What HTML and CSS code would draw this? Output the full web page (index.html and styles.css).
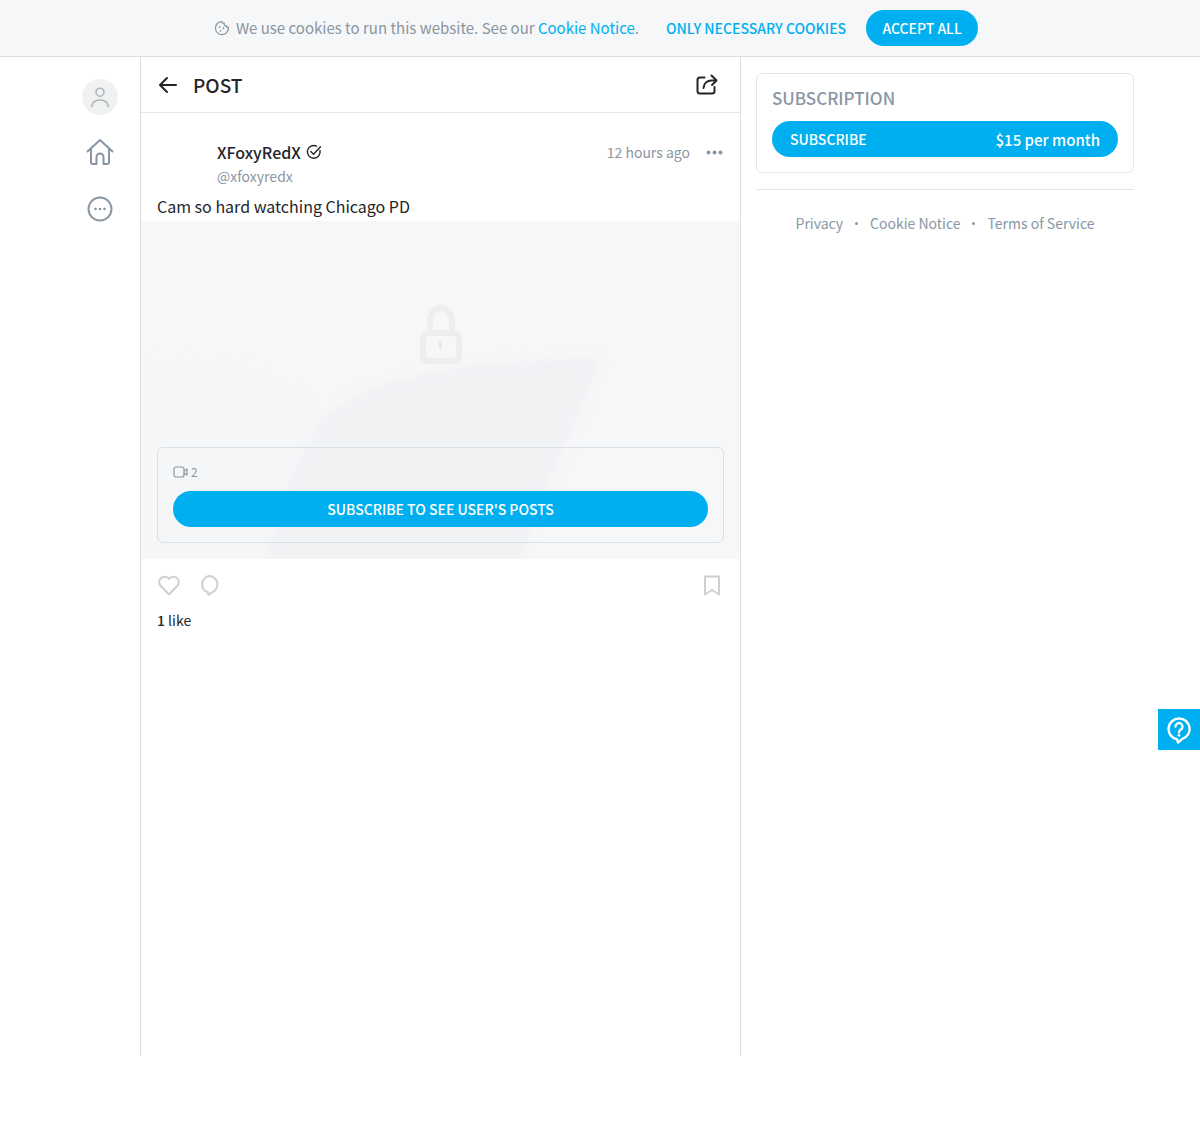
FILE: index.html
```html
<!DOCTYPE html>
<html lang="en">
<head>
  <meta charset="UTF-8">
  <meta name="viewport" content="width=device-width, initial-scale=1.0">
  <title>Post</title>
  <link rel="stylesheet" href="styles.css">
</head>
<body>
  <div class="cookie-bar">
    <svg class="cookie-icon" width="16" height="16" viewBox="0 0 16 16" fill="none" stroke="#8a96a3" stroke-width="1.3">
      <path d="M8 1.6a1.8 1.8 0 0 0 2.2 1.9 2 2 0 0 0 2.2 2.4 1.8 1.8 0 0 0 2 1.6A6.5 6.5 0 1 1 8 1.6z"/>
      <circle cx="5.6" cy="7" r=".9" fill="#8a96a3" stroke="none"/>
      <circle cx="9.4" cy="8.2" r=".9" fill="#8a96a3" stroke="none"/>
      <circle cx="6.6" cy="10.8" r=".9" fill="#8a96a3" stroke="none"/>
    </svg>
    <span class="cookie-text">We use cookies to run this website. See our <a href="#">Cookie Notice</a>.</span>
    <a class="cookie-necessary" href="#">ONLY NECESSARY COOKIES</a>
    <button class="pill cookie-accept">ACCEPT ALL</button>
  </div>

  <div class="page">
    <nav class="sidebar">
      <div class="nav-avatar">
        <svg width="24" height="24" viewBox="0 0 24 24" fill="none" stroke="#aeb5bb" stroke-width="1.6" stroke-linecap="round">
          <circle cx="12" cy="7.2" r="4"/>
          <path d="M3.6 21.5c.8-4.4 4-6.5 8.4-6.5s7.600 2.100 8.400 6.500"/>
        </svg>
      </div>
      <svg class="nav-icon" width="28" height="28" viewBox="0 0 28 28" fill="none" stroke="#8a96a3" stroke-width="2" stroke-linejoin="round" stroke-linecap="round">
        <path d="M1.500 13.500 14 2l12.500 11.500"/>
        <path d="M5 10.500V24a2 2 0 0 0 2 2h3.500v-7a3.500 3.500 0 0 1 7 0v7H21a2 2 0 0 0 2-2V10.500"/>
      </svg>
      <svg class="nav-icon" width="26" height="26" viewBox="0 0 26 26" fill="none" stroke="#8a96a3" stroke-width="2">
        <circle cx="13" cy="13" r="11.500"/>
        <circle cx="8.500" cy="13" r="1.300" fill="#8a96a3" stroke="none"/>
        <circle cx="13" cy="13" r="1.300" fill="#8a96a3" stroke="none"/>
        <circle cx="17.500" cy="13" r="1.300" fill="#8a96a3" stroke="none"/>
      </svg>
    </nav>

    <main class="content">
      <header class="post-header">
        <svg width="20" height="20" viewBox="0 0 20 20" fill="none" stroke="#242529" stroke-width="2" stroke-linecap="round" stroke-linejoin="round">
          <path d="M18 10H2.500M9 3l-7 7 7 7"/>
        </svg>
        <h1>POST</h1>
        <svg class="share-icon" width="22" height="22" viewBox="0 0 22 22" fill="none" stroke="#242529" stroke-width="2" stroke-linecap="round" stroke-linejoin="round">
          <path d="M8.500 3.500H4a2.500 2.500 0 0 0-2.500 2.500v11A2.500 2.500 0 0 0 4 19.500h12a2.500 2.500 0 0 0 2.500-2.500v-4"/>
          <path d="M7.500 14c.4-4.600 3.600-7.500 8-7.500h4.500"/>
          <path d="M15.500 1.500l5 5-4.500 4.500"/>
        </svg>
      </header>

      <div class="post-meta">
        <div class="author">
          <div class="author-name">XFoxyRedX
            <svg width="16" height="16" viewBox="0 0 16 16" fill="none" stroke="#242529" stroke-width="1.400" stroke-linecap="round" stroke-linejoin="round">
              <path d="M14 6.500A6.400 6.400 0 1 1 10.500 2.100"/>
              <path d="M4.800 7.500 7.500 10.200 14.500 2.800"/>
            </svg>
          </div>
          <div class="author-handle">@xfoxyredx</div>
        </div>
        <span class="post-time">12 hours ago</span>
        <svg class="post-more" width="17" height="5" viewBox="0 0 17 5" fill="#8a96a3">
          <circle cx="2.500" cy="2.500" r="2"/><circle cx="8.500" cy="2.500" r="2"/><circle cx="14.500" cy="2.500" r="2"/>
        </svg>
      </div>
      <p class="post-text">Cam so hard watching Chicago PD</p>

      <div class="locked">
        <svg class="locked-bg" width="600" height="338" viewBox="0 0 600 338">
          <defs><filter id="soft"><feGaussianBlur stdDeviation="5"/></filter></defs>
          <g filter="url(#soft)">
            <path d="M0 143C70 138 130 145 175 190L160 338H0z" fill="#f5f6f8"/>
            <path d="M125 338 148 260 180 200C230 150 340 138 458 138 440 200 400 265 380 338z" fill="#f1f2f4"/>
          </g>
          <g fill="none" stroke="#eceef0" stroke-width="6">
            <rect x="282" y="112" width="36" height="28" rx="5"/>
            <path d="M289 110V100a11 13 0 0 1 22 0v10"/>
          </g>
          <rect x="298" y="120" width="3" height="8" fill="#e6e8ea"/>
        </svg>
        <div class="locked-box">
          <div class="locked-count">
            <svg width="16" height="12" viewBox="0 0 16 12" fill="none" stroke="#8a96a3" stroke-width="1.200" stroke-linejoin="round">
              <rect x="1" y="1" width="10" height="10" rx="2"/>
              <path d="M11 5l3-2v6l-3-2"/>
            </svg>
            2
          </div>
          <button class="pill locked-btn">SUBSCRIBE TO SEE USER'S POSTS</button>
        </div>
      </div>

      <div class="post-actions">
        <svg width="24" height="24" viewBox="0 0 24 24" fill="none" stroke="#ccd0d3" stroke-width="2" stroke-linejoin="round">
          <path d="M12 21.500 3.800 13a5.500 5.500 0 0 1 0-7.800 5.500 5.500 0 0 1 7.700 0l.5.600.5-.6a5.500 5.500 0 0 1 7.700 0 5.500 5.500 0 0 1 0 7.800z"/>
        </svg>
        <svg class="action-comment" width="24" height="24" viewBox="0 0 24 24" fill="none" stroke="#ccd0d3" stroke-width="2" stroke-linejoin="round">
          <path d="M12 3a8.500 8.500 0 0 1 2.500 16.600L11.500 22l-.6-2.600A8.500 8.500 0 0 1 12 3z"/>
        </svg>
        <svg class="action-save" width="24" height="24" viewBox="0 0 24 24" fill="none" stroke="#ccd0d3" stroke-width="2" stroke-linejoin="round">
          <path d="M5 3.500h14v18l-7-4.500-7 4.500z"/>
        </svg>
      </div>
      <div class="post-likes"><b>1</b> like</div>
    </main>

    <aside class="aside">
      <section class="sub-card">
        <h2>SUBSCRIPTION</h2>
        <button class="pill sub-btn"><span>SUBSCRIBE</span><span>$15 per month</span></button>
      </section>
      <footer class="aside-links">
        <a href="#">Privacy</a><span class="dot"></span><a href="#">Cookie Notice</a><span class="dot"></span><a href="#">Terms of Service</a>
      </footer>
    </aside>
  </div>

  <div class="help-tab">
    <svg width="26" height="28" viewBox="0 0 26 28" fill="none" stroke="#fff" stroke-width="2.400" stroke-linejoin="round">
      <path d="M13 2.500a10.500 10.500 0 0 1 3 20.600L12 26.500l-1-3.200A10.500 10.500 0 0 1 13 2.500z"/>
      <path d="M9.500 10.500a3.500 3.500 0 1 1 5.400 3c-1.300.8-1.900 1.400-1.900 2.800" stroke-linecap="round"/>
      <circle cx="13" cy="19.300" r="1.400" fill="#fff" stroke="none"/>
    </svg>
  </div>
</body>
</html>
```

FILE: styles.css
```css
* {
  box-sizing: border-box;
}
body {
  margin: 0;
  height: 1139px;
  overflow: hidden;
  background-color: #fff;
  color: #242529;
  font-family: "Noto Sans CJK SC", "Noto Sans", sans-serif;
  font-size: 16px;
  line-height: 20px;
}
a {
  color: inherit;
  text-decoration: none;
}
button {
  font-family: inherit;
}
.pill {
  border: none;
  border-radius: 18px;
  height: 36px;
  background-color: #00aff0;
  color: #fff;
  font-size: 14px;
  font-weight: 500;
}

/* cookie bar */
.cookie-bar {
  display: flex;
  align-items: center;
  justify-content: center;
  height: 57px;
  padding-right: 8px;
  background-color: #f6f7f8;
  border-bottom: 1px solid #dcdfe1;
}
.cookie-icon {
  margin-right: 6px;
}
.cookie-text {
  color: #8a96a3;
  font-size: 15px;
}
.cookie-text a {
  color: #00aff0;
}
.cookie-necessary {
  margin-left: 27px;
  color: #00aff0;
  font-size: 14px;
  font-weight: 500;
}
.cookie-accept {
  margin-left: 20px;
  width: 112px;
}

/* columns */
.page {
  display: flex;
  height: 999px;
}
.sidebar {
  display: flex;
  flex-direction: column;
  align-items: center;
  width: 141px;
  padding: 22px 0 0 59px;
  border-right: 1px solid #dcdfe1;
}
.nav-avatar {
  display: flex;
  align-items: center;
  justify-content: center;
  width: 36px;
  height: 36px;
  border-radius: 50%;
  background-color: #f0f2f2;
}
.nav-icon {
  margin-top: 23px;
}
.nav-icon + .nav-icon {
  margin-top: 30px;
}
.content {
  width: 600px;
  border-right: 1px solid #dcdfe1;
}
.post-header {
  display: flex;
  align-items: center;
  height: 56px;
  padding: 0 22px 0 17px;
  border-bottom: 1px solid #e3e5e7;
}
.post-header h1 {
  flex: 1;
  margin: 0 0 0 15px;
  font-size: 19px;
  font-weight: 500;
}
.post-meta {
  display: flex;
  padding: 29px 17px 0 76px;
}
.author {
  flex: 1;
}
.author-name {
  display: flex;
  align-items: center;
  gap: 5px;
  font-size: 16px;
  font-weight: 500;
}
.author-handle {
  margin-top: 4px;
  color: #8a96a3;
  font-size: 14px;
}
.post-time {
  color: #8a96a3;
  font-size: 14px;
}
.post-more {
  margin: 8px 0 0 16px;
}
.post-text {
  margin: 8px 16px 0;
  font-size: 16px;
  line-height: 24px;
}
.locked {
  position: relative;
  height: 338px;
  margin-top: 3px;
  padding: 226px 16px 0;
  background-color: #f6f7f8;
}
.locked-bg {
  position: absolute;
  top: 0;
  left: 0;
}
.locked-box {
  position: relative;
  height: 96px;
  padding: 14px 15px 0;
  border: 1px solid #dcdfe1;
  border-radius: 6px;
}
.locked-count {
  display: flex;
  align-items: center;
  gap: 2px;
  height: 20px;
  color: #8a96a3;
  font-size: 12px;
}
.locked-btn {
  width: 100%;
  margin-top: 9px;
}
.post-actions {
  display: flex;
  align-items: center;
  height: 52px;
  padding: 0 16px;
}
.action-comment {
  margin-left: 16px;
}
.action-save {
  margin-left: auto;
}
.post-likes {
  margin: 0 16px;
  font-size: 14px;
  line-height: 18px;
}
.post-likes b {
  font-weight: 500;
}

/* right column */
.aside {
  width: 378px;
  margin-left: 15px;
  padding-top: 16px;
}
.sub-card {
  height: 100px;
  padding: 14px 15px 0;
  border: 1px solid #e3e5e7;
  border-radius: 6px;
}
.sub-card h2 {
  margin: 0;
  color: #8a96a3;
  font-size: 17px;
  font-weight: 500;
}
.sub-btn {
  display: flex;
  align-items: center;
  justify-content: space-between;
  width: 100%;
  margin-top: 13px;
  padding: 0 18px;
}
.sub-btn span:last-child {
  font-size: 15px;
}
.aside-links {
  display: flex;
  align-items: center;
  justify-content: center;
  gap: 12px;
  margin-top: 16px;
  padding-top: 23px;
  border-top: 1px solid #e3e5e7;
  color: #8a96a3;
  font-size: 14px;
}
.dot {
  width: 3px;
  height: 3px;
  border-radius: 50%;
  background-color: #8a96a3;
}

.help-tab {
  position: fixed;
  top: 709px;
  right: 0;
  display: flex;
  align-items: center;
  justify-content: center;
  width: 42px;
  height: 41px;
  background-color: #00aff0;
}
```
